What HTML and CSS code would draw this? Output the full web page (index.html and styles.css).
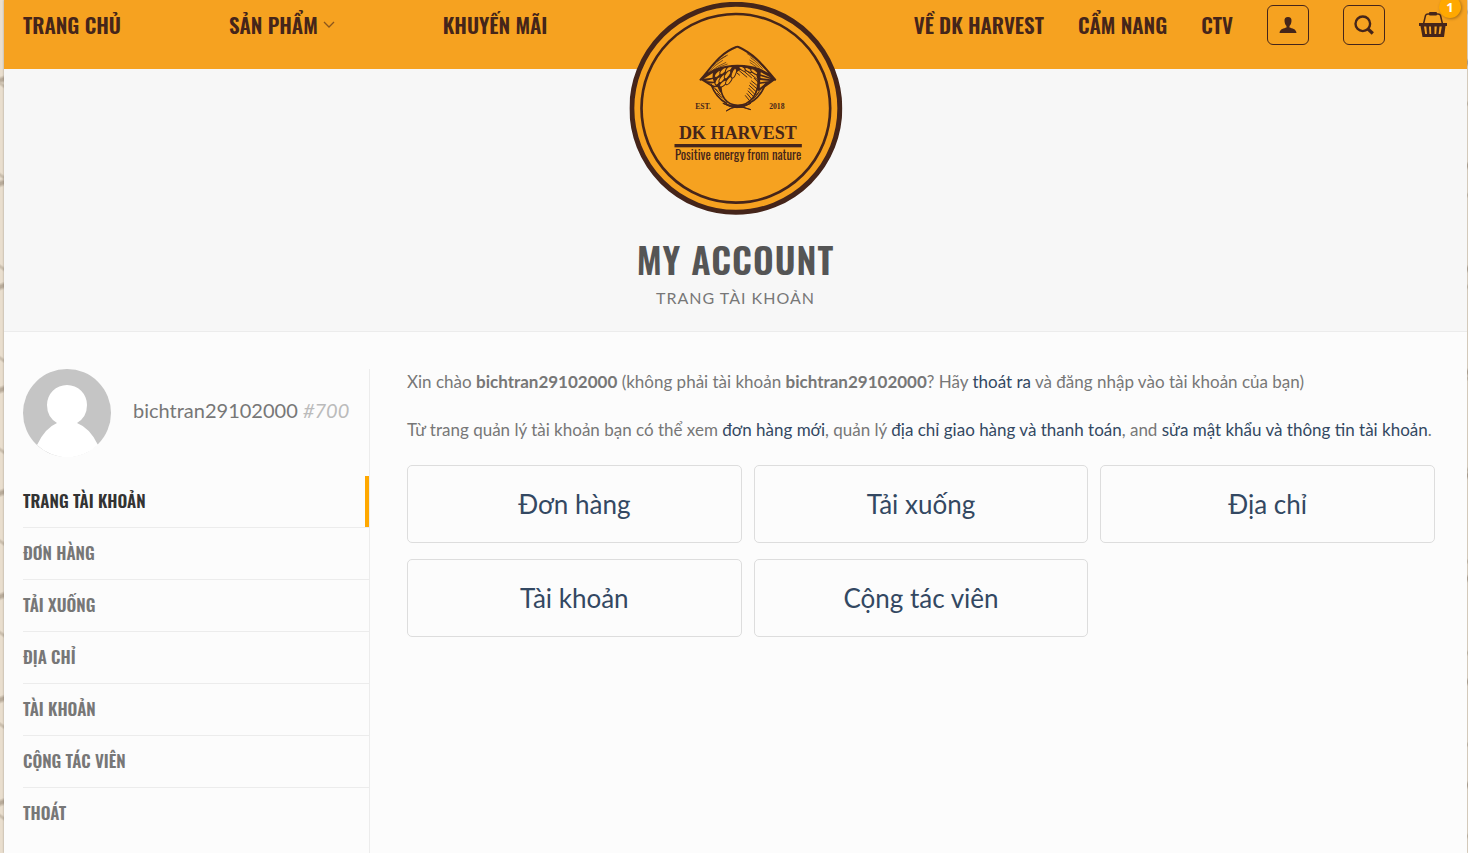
FILE: index.html
```html
<!DOCTYPE html>
<html lang="vi">
<head>
    <meta charset="UTF-8">
    <meta name="viewport" content="width=device-width, initial-scale=1.0">
    <title>My account - DK Harvest</title>
    <link rel="stylesheet" href="styles.css">
</head>
<body>
    <div class="wrapper">
        <header class="header">
            <nav class="nav nav-left">
                <a href="#">TRANG CHỦ</a>
                <a href="#" class="has-dropdown">SẢN PHẨM
                    <svg class="icon-down" width="12" height="8" viewBox="0 0 12 8"><path d="M1 1l5 5 5-5" fill="none" stroke="currentColor" stroke-width="1.3"/></svg>
                </a>
                <a href="#">KHUYẾN MÃI</a>
            </nav>

            <a href="#" class="logo" aria-label="DK Harvest">
                <svg viewBox="27 4 639 639">
                    <circle cx="346" cy="323" r="312" fill="#f6a220" stroke="#45251a" stroke-width="15"/>
                    <circle cx="346" cy="323" r="283" fill="none" stroke="#45251a" stroke-width="8"/>
                    <!-- shadow under the hat -->
                    <path d="M240 237Q262 207 322 195Q350 191 382 197Q438 207 465 237L436 258L412 272V240H302V276L270 256Z" fill="#45251a"/>
                    <g fill="#f6a220">
                        <path d="M250 234L277 217L276 231ZM256 241L277 235L280 243ZM266 249L282 247L286 257ZM280 260L291 259L298 273Z"/>
                        <path d="M421 215L452 231L420 221ZM420 226L451 236L420 232ZM419 238L447 241L419 245ZM418 250L436 247L418 262Z"/>
                    </g>
                    <!-- face -->
                    <path d="M302 250C297 285 318 313 352 314C390 313 415 280 413 235Q410 208 382 202Q352 200 335 226Q325 245 302 250Z" fill="#f6a220" stroke="#45251a" stroke-width="5"/>
                    <path d="M272 252Q286 290 318 308M435 250Q420 290 386 308" fill="none" stroke="#45251a" stroke-width="5" stroke-linecap="round"/>
                    <path d="M283 264L300 282M424 262L407 284M416 274L398 296M290 278L306 292" fill="none" stroke="#45251a" stroke-width="3"/>
                    <path d="M346 214L358 224M356 210L380 230M366 208L394 232M376 208L412 238M392 240L412 256M388 246L410 265M386 254L408 274M384 262L404 282M382 270L400 289M379 278L394 296M374 284L388 301M400 232L412 244" fill="none" stroke="#45251a" stroke-width="3"/>
                    <!-- rice leaves -->
                    <g fill="#f6a220" stroke="#45251a" stroke-width="3">
                        <ellipse cx="292" cy="220" rx="13" ry="6" transform="rotate(-48 292 220)"/>
                        <ellipse cx="308" cy="211" rx="13" ry="6" transform="rotate(-48 308 211)"/>
                        <ellipse cx="325" cy="205" rx="13" ry="6" transform="rotate(-48 325 205)"/>
                        <ellipse cx="292" cy="241" rx="13" ry="6" transform="rotate(-62 292 241)"/>
                        <ellipse cx="305" cy="234" rx="14" ry="6" transform="rotate(-55 305 234)"/>
                        <ellipse cx="321" cy="222" rx="14" ry="6" transform="rotate(-55 321 222)"/>
                        <ellipse cx="308" cy="249" rx="13" ry="6" transform="rotate(-42 308 249)"/>
                        <ellipse cx="325" cy="240" rx="14" ry="6" transform="rotate(-55 325 240)"/>
                        <ellipse cx="340" cy="218" rx="15" ry="6" transform="rotate(-68 340 218)"/>
                        <ellipse cx="366" cy="204" rx="12" ry="5" transform="rotate(32 366 204)"/>
                        <ellipse cx="384" cy="208" rx="12" ry="5" transform="rotate(28 384 208)"/>
                        <ellipse cx="401" cy="213" rx="12" ry="5" transform="rotate(36 401 213)"/>
                    </g>
                    <!-- scarf knot -->
                    <path d="M317 331Q346 308 391 327Q364 317 347 319Q334 320 317 331ZM307 308Q350 322 391 308Q350 334 307 308Z" fill="#45251a" stroke="#45251a" stroke-width="3"/>
                    <!-- conical hat -->
                    <path d="M240 237C269 206 293 160 347 139Q350 137 354 139C409 164 435 205 464 237Q425 200 371 196Q290 189 240 237Z" fill="#f6a220" stroke="#45251a" stroke-width="6" stroke-linejoin="round"/>
                    <path d="M261 218Q285 190 307 179M269 214Q290 195 317 185M278 210Q296 197 321 190M277 197Q302 170 322 163M290 182L317 166M435 207Q412 177 379 158M426 204Q407 180 390 171M417 201Q401 184 387 178M408 199L388 185M442 211L420 186" fill="none" stroke="#45251a" stroke-width="2"/>
                    <g fill="#45251a">
                        <text x="224" y="325" class="logo-small">EST.</text>
                        <text x="446" y="325" class="logo-small">2018</text>
                        <text x="352" y="415" class="logo-name">DK HARVEST</text>
                        <rect x="162" y="430" width="382" height="10"/>
                        <text x="353" y="478" class="logo-slogan">Positive energy from nature</text>
                    </g>
                </svg>
            </a>

            <nav class="nav nav-right">
                <a href="#">VỀ DK HARVEST</a>
                <a href="#">CẨM NANG</a>
                <a href="#">CTV</a>
                <a href="#" class="icon-box" aria-label="Tài khoản">
                    <svg width="18" height="18" viewBox="0 0 18 18"><path d="M9 1C6.500 1 5.300 2.500 5.500 5C5.700 7.300 6.300 9 7.500 10V11.500C5 12.500 1 12.500 .5 17H17.500C17 12.500 13 12.500 10.500 11.500V10C11.700 9 12.300 7.300 12.500 5C12.700 2.500 11.500 1 9 1Z" fill="currentColor"/></svg>
                </a>
                <button type="button" class="icon-box search-btn" aria-label="Tìm kiếm">
                    <svg width="20" height="20" viewBox="0 0 20 20"><circle cx="8.800" cy="8.800" r="7.300" fill="none" stroke="currentColor" stroke-width="2.400"/><path d="M14 14L18.800 18.500" stroke="currentColor" stroke-width="3.200"/></svg>
                </button>
                <a href="#" class="cart" aria-label="Giỏ hàng">
                    <svg width="28" height="26" viewBox="0 0 28 26"><path d="M4.500 12L6.500 3.500Q7 2 9 2H19Q21 2 21.500 3.500L23.500 12" fill="none" stroke="currentColor" stroke-width="1.500"/><rect x="10" y="0" width="8" height="3.500" rx="1" fill="currentColor"/><path fill="currentColor" fill-rule="evenodd" d="M0 11H28V14H26.500L25 25H3.500L1.500 14H0ZM5 14.500L6.200 22H8L7.300 14.500ZM10 14.500L10.500 22H12.200L12 14.500ZM15.500 14.500V22H17.200L17.800 14.500ZM20.500 14.500L19.700 22H21.500L22.800 14.500Z"/></svg>
                    <span class="cart-count">1</span>
                </a>
            </nav>
        </header>

        <div class="page-title">
            <h1>MY ACCOUNT</h1>
            <small>TRANG TÀI KHOẢN</small>
        </div>

        <main class="container">
            <aside class="sidebar">
                <div class="account-user">
                    <svg class="avatar" viewBox="0 0 88 88"><circle cx="44" cy="44" r="44" fill="#c5c5c5"/><path d="M14 76Q22 59 34 54Q24 48 24 36A20 20 0 0 1 64 36Q64 48 54 54Q67 59 75 76A44 44 0 0 1 14 76Z" fill="#fff"/></svg>
                    <span class="user-name">bichtran29102000 <em>#700</em></span>
                </div>
                <ul class="account-nav">
                    <li class="active"><a href="#">TRANG TÀI KHOẢN</a></li>
                    <li><a href="#">ĐƠN HÀNG</a></li>
                    <li><a href="#">TẢI XUỐNG</a></li>
                    <li><a href="#">ĐỊA CHỈ</a></li>
                    <li><a href="#">TÀI KHOẢN</a></li>
                    <li><a href="#">CỘNG TÁC VIÊN</a></li>
                    <li><a href="#">THOÁT</a></li>
                </ul>
            </aside>

            <section class="content">
                <p>Xin chào <strong>bichtran29102000</strong> (không phải tài khoản <strong>bichtran29102000</strong>? Hãy <a href="#">thoát ra</a> và đăng nhập vào tài khoản của bạn)</p>
                <p>Từ trang quản lý tài khoản bạn có thể xem <a href="#">đơn hàng mới</a>, quản lý <a href="#">địa chỉ giao hàng và thanh toán</a>, and <a href="#">sửa mật khẩu và thông tin tài khoản</a>.</p>
                <div class="dashboard-links">
                    <a href="#">Đơn hàng</a>
                    <a href="#">Tải xuống</a>
                    <a href="#">Địa chỉ</a>
                    <a href="#">Tài khoản</a>
                    <a href="#">Cộng tác viên</a>
                </div>
            </section>
        </main>
    </div>
</body>
</html>
```
FILE: styles.css
```css
* {
    box-sizing: border-box;
}
body {
    margin: 0;
    font-family: Lato, "Noto Sans", sans-serif;
    font-size: 17px;
    line-height: 26px;
    color: #777;
    background-color: #e9dece;
    background-image:
        repeating-linear-gradient(35deg, transparent 0 28px, #cbbfae 30px 31px, transparent 33px 75px),
        repeating-linear-gradient(-20deg, transparent 0 60px, #b9ac9b 63px 65px, transparent 68px 97px);
}
a {
    color: #334862;
    text-decoration: none;
}
.wrapper {
    margin: 0 1px 0 4px;
    min-height: 100vh;
    background-color: #fcfcfc;
    box-shadow: 0 0 2px rgba(0, 0, 0, 0.3);
    display: flex;
    flex-direction: column;
}

/* Header */
.header {
    position: relative;
    display: flex;
    justify-content: space-between;
    height: 69px;
    padding: 0 20px 0 19px;
    background-color: #f6a220;
}
.nav {
    display: flex;
    align-items: center;
    height: 50px;
}
.nav a {
    font-family: Oswald, "Liberation Sans Narrow", sans-serif;
    font-size: 21px;
    font-weight: 600;
    color: #45251a;
    white-space: nowrap;
}
.nav-left {
    gap: 108px;
}
.nav-right {
    gap: 34px;
}
.has-dropdown {
    display: flex;
    align-items: center;
    gap: 5px;
}
.icon-down {
    opacity: 0.6;
}
.nav .icon-box {
    display: flex;
    align-items: center;
    justify-content: center;
    width: 42px;
    height: 40px;
    padding: 0;
    border: 1px solid #45251a;
    border-radius: 6px;
    background: none;
    color: #45251a;
    cursor: pointer;
}
.nav .cart {
    position: relative;
    display: flex;
}
.cart-count {
    position: absolute;
    top: -16px;
    right: -14px;
    width: 22px;
    height: 22px;
    border-radius: 50%;
    background-color: #ffa800;
    box-shadow: 1px 1px 3px rgba(0, 0, 0, 0.3);
    color: #fff;
    font-family: "Open Sans", sans-serif;
    font-size: 13px;
    font-weight: bold;
    line-height: 22px;
    text-align: center;
}
.logo {
    position: absolute;
    top: 2px;
    left: 50%;
    width: 213px;
    height: 213px;
    transform: translateX(-50%);
}
.logo svg {
    display: block;
    width: 100%;
    height: 100%;
}
.logo-small {
    font: bold 23px "Liberation Serif", serif;
}
.logo-name {
    font: bold 54px "Liberation Serif", serif;
    text-anchor: middle;
}
.logo-slogan {
    font: 38px Oswald, "Liberation Sans Narrow", sans-serif;
    text-anchor: middle;
}

/* Page title */
.page-title {
    padding: 165px 20px 19px;
    text-align: center;
    background-color: #f7f7f7;
    border-bottom: 1px solid #ececec;
}
.page-title h1 {
    margin: 0;
    font-family: Oswald, "Liberation Sans Narrow", sans-serif;
    font-size: 36px;
    font-weight: 600;
    letter-spacing: 1px;
    line-height: 50px;
    color: #555;
}
.page-title small {
    display: block;
    font-size: 16px;
    letter-spacing: 1px;
    line-height: 28px;
}

/* Account */
.container {
    flex: 1;
    display: flex;
    gap: 37px;
    padding: 37px 20px 0 19px;
}
.sidebar {
    flex: 0 0 347px;
    border-right: 1px solid #ececec;
}
.account-user {
    display: flex;
    align-items: center;
    gap: 22px;
    margin-bottom: 19px;
}
.avatar {
    width: 88px;
    height: 88px;
}
.user-name {
    padding-bottom: 6px;
    font-size: 20px;
    white-space: nowrap;
}
.user-name em {
    color: #bbb;
}
.account-nav {
    margin: 0;
    padding: 0;
    list-style-type: none;
}
.account-nav a {
    display: block;
    padding: 11px 0 13px;
    font-family: Oswald, "Liberation Sans Narrow", sans-serif;
    font-size: 17px;
    line-height: 27px;
    font-weight: 600;
    color: #777;
}
.account-nav li + li {
    border-top: 1px solid #ececec;
}
.account-nav .active a {
    color: #333;
    border-right: 4px solid #ffa800;
}
.content {
    flex: 1;
    min-width: 0;
}
.content p {
    margin: 0 0 22px;
}
.dashboard-links {
    display: grid;
    grid-template-columns: repeat(3, 1fr);
    gap: 16px 12px;
    padding-right: 12px;
}
.dashboard-links a {
    padding: 25px 0;
    border: 1px solid #ddd;
    border-radius: 5px;
    font-size: 26px;
    text-align: center;
}

@media (max-width: 849px) {
    .container {
        flex-direction: column;
    }
    .nav a:not(.icon-box):not(.cart) {
        display: none;
    }
    .dashboard-links {
        grid-template-columns: 1fr;
    }
}
```
